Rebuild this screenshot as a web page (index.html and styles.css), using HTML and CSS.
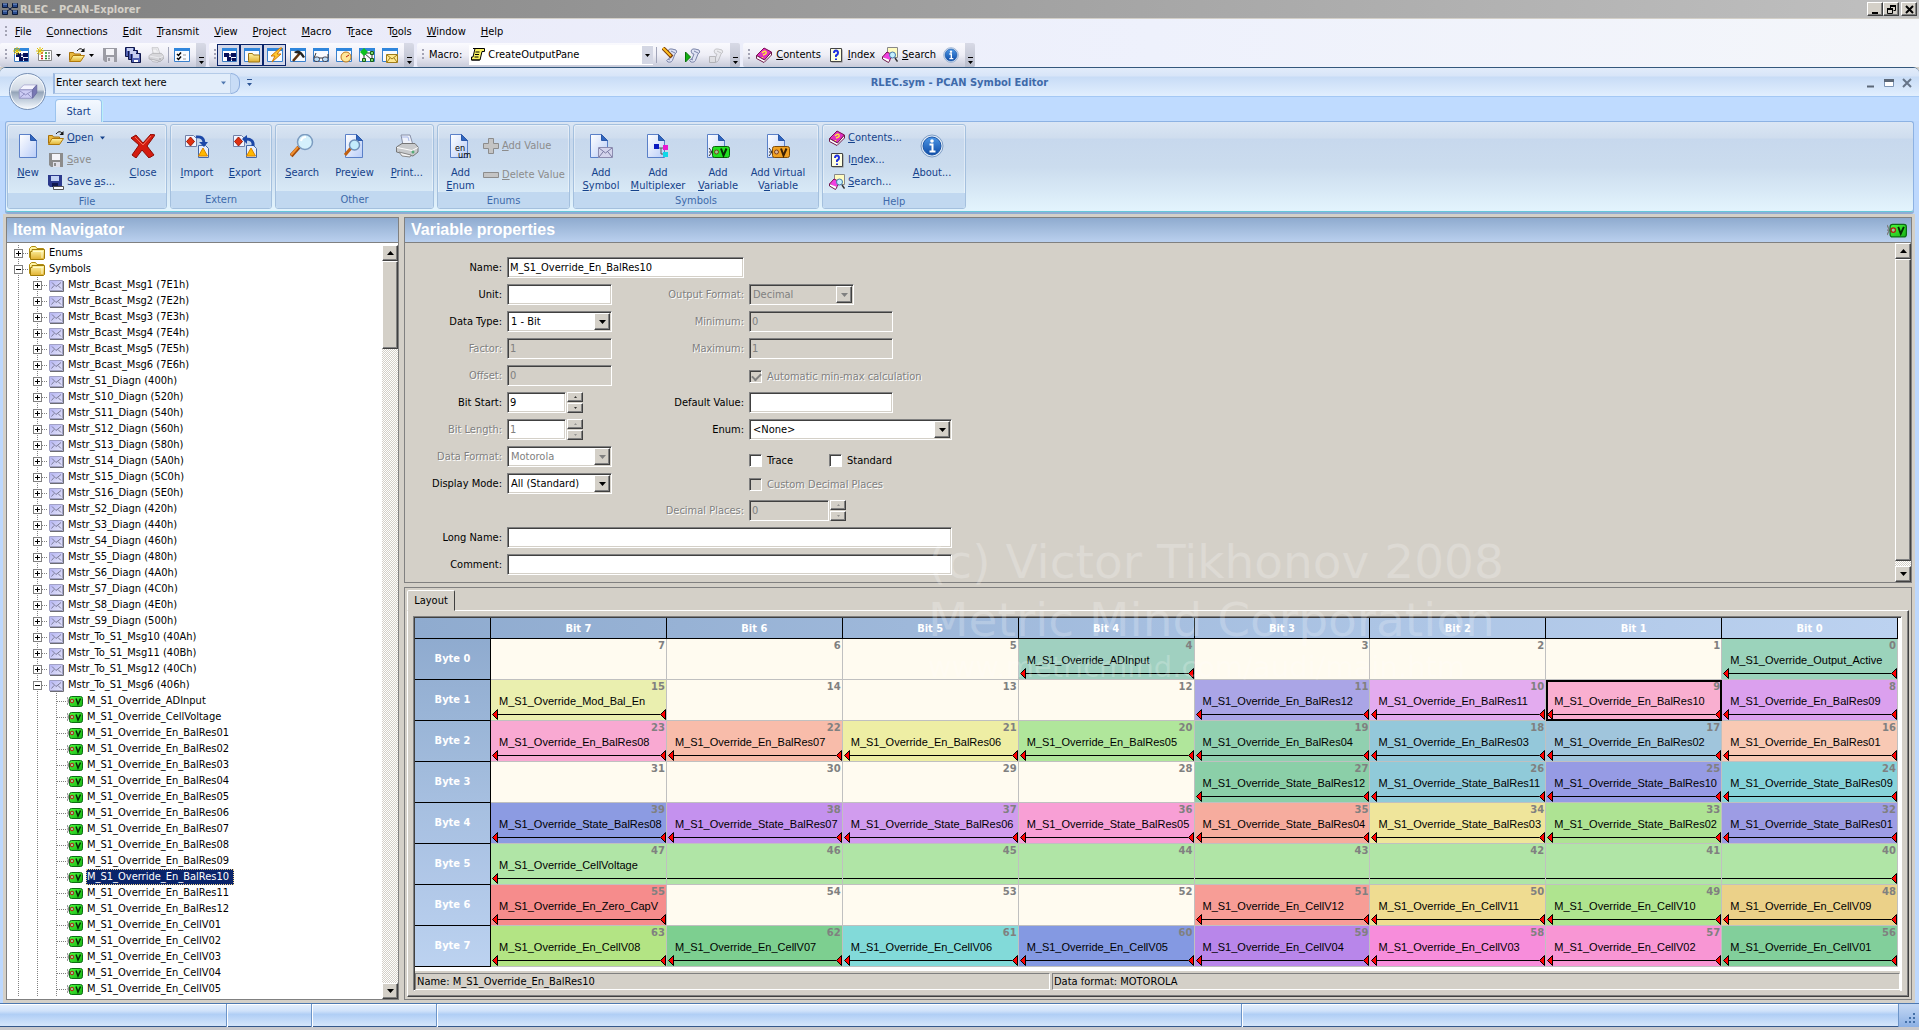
FILE: index.html
```html
<!DOCTYPE html>
<html lang="en">
<head>
<meta charset="utf-8">
<title>RLEC - PCAN-Explorer</title>
<link rel="stylesheet" href="styles.css">
</head>
<body>
<svg class="sprite" width="0" height="0" aria-hidden="true">
  <defs>
    <linearGradient id="g-page" x1="0" y1="0" x2="1" y2="1"><stop offset="0" stop-color="#fff"/><stop offset="1" stop-color="#b9cdf8"/></linearGradient>
    <linearGradient id="g-fold" x1="0" y1="0" x2="0" y2="1"><stop offset="0" stop-color="#fff6a8"/><stop offset="1" stop-color="#e0b030"/></linearGradient>
    <linearGradient id="g-green" x1="0" y1="0" x2="1" y2="1"><stop offset="0" stop-color="#4cff3c"/><stop offset="1" stop-color="#18b014"/></linearGradient>
    <linearGradient id="g-blue" x1="0" y1="0" x2="0" y2="1"><stop offset="0" stop-color="#4d97e6"/><stop offset="1" stop-color="#0d4ba6"/></linearGradient>
    <linearGradient id="g-mail" x1="0" y1="0" x2="1" y2="1"><stop offset="0" stop-color="#b4b4f4"/><stop offset="1" stop-color="#e4e4f8"/></linearGradient>
  </defs>
  <symbol id="app" viewBox="0 0 16 16"><path d="M3 4l10 8M3 12l10-8" stroke="#10204a"/><g fill="#2a4a8a" stroke="#0a1838"><path d="M.5 2.500h5v4h-5zM10.500 2.500h5v4h-5zM.5 9.500h5v4h-5zM10.500 9.500h5v4h-5z"/></g><path d="M1 3h4M11 3h4M1 10h4M11 10h4" stroke="#86a8e0"/></symbol>
  <symbol id="net" viewBox="0 0 16 16"><path d="M1.500 1.500h14v13h-14z" fill="#fff" stroke="#3a7ac0"/><path d="M1 1h15v3H1z" fill="#2f86dc"/><path d="M3 6h5v4H3zM10 6h5v4h-5zM6 10h4v4H6zM11 11h4v3h-4z" fill="#06105a"/><path d="M6 8h6M8 12h5" stroke="#06105a"/></symbol>
  <symbol id="spark" viewBox="0 0 16 16"><path d="M8 0v16M0 8h16M2 2l12 12M14 2L2 14" stroke="#e0c400" stroke-width="2"/></symbol>
  <symbol id="list" viewBox="0 0 16 16"><path d="M2.500 3.500h13v10h-13z" fill="#fff" stroke="#888"/><path d="M5 6h2M5 9h2M5 11.500h2" stroke="#d02020" stroke-width="1.500"/><path d="M9 6h2M9 9h2M9 11.500h2" stroke="#209020" stroke-width="1.500"/><path d="M12 6h2M12 9h2M12 11.500h2" stroke="#888" stroke-width="1.500"/></symbol>
  <symbol id="open" viewBox="0 0 16 16"><path d="M.5 13.500v-8h4l1 1.500h6v2" fill="#e8b840" stroke="#a87008"/><path d="M.5 14.500L4 8.500h11.500l-4 6z" fill="url(#g-fold)" stroke="#b07808"/><path d="M8 4q3-4 6-1" fill="none" stroke="#111"/><path d="M15.500 1v4h-4z" fill="#111"/></symbol>
  <symbol id="save" viewBox="0 0 16 16"><path d="M1 1h14v14H3l-2-2z" fill="currentColor"/><path d="M4 2h8v6H4z" fill="#f4f4f8"/><path d="M5 10h7v5H5z" fill="#e0e0e8"/><path d="M6 11h2v3H6z" fill="currentColor"/></symbol>
  <symbol id="saveas" viewBox="0 0 16 16"><path d="M0 1h14v12H2l-2-2z" fill="#2c3a8c"/><path d="M3 2h8v5H3z" fill="#c4d4f4"/><path d="M4 9h6v4H4z" fill="#10184c"/><path d="M5.500 12.500h10v3h-10z" fill="#fff" stroke="#555"/></symbol>
  <symbol id="saveall" viewBox="0 0 16 16"><g stroke="#10184c" fill="#5060b0"><path d="M.5 .5h9v9h-9z"/><path d="M3.500 3.500h9v9h-9z"/><path d="M6.500 6.500h9v9h-9z"/></g><path d="M2 1h6v3H2zM5 4h6v3H5zM8 7h6v4H8z" fill="#c8d0f0"/><path d="M9 13h4v2H9z" fill="#fff"/></symbol>
  <symbol id="printer" viewBox="0 0 24 24"><path d="M6 1h9l3 10H8z" fill="#eef2fb" stroke="#8890a8"/><path d="M7 3h6l1 4" fill="none" stroke="#a8b8e8"/><path d="M1.500 13L7 9.500h13l3 3.500v5l-5 4-16.500-4z" fill="#c8cacc" stroke="#777"/><path d="M2 13.500l15 3 6-3" fill="none" stroke="#fff"/><path d="M4 18l12 3-1 2-8-1z" fill="#f4f4f4" stroke="#888"/><circle cx="18" cy="18" r="1.500" fill="#5a7"/></symbol>
  <symbol id="win" viewBox="0 0 16 16"><path d="M.5 1.500h15v13H.5z" fill="#f8fbff" stroke="#3a80cc"/><path d="M0 1h16v3H0z" fill="#2f86dc"/></symbol>
  <symbol id="check" viewBox="0 0 16 16"><use href="#win"/><path d="M3 7l1.500 1.500L7 5.500M3 11l1.500 1.500L7 9.500" fill="none" stroke="#000" stroke-width="1.500"/><path d="M9 8h3M9 12h3" stroke="#999"/></symbol>
  <symbol id="folderwin" viewBox="0 0 16 16"><use href="#win"/><path d="M4.500 13.500v-7h4l1 1.500h6v7h-11z" fill="url(#g-fold)" stroke="#9c7410"/></symbol>
  <symbol id="boltwin" viewBox="0 0 16 16"><use href="#win"/><path d="M13 1L4 9h4l-3 6 9-8h-4l5-6z" fill="#ffc830" stroke="#d07808"/></symbol>
  <symbol id="hammer" viewBox="0 0 16 16"><use href="#win"/><path d="M3 14l7-8" stroke="#5c3210" stroke-width="2.500"/><path d="M4 5q5-4 9 2l2 3-2 1-3-4-5-1z" fill="#222"/></symbol>
  <symbol id="glasses" viewBox="0 0 16 16"><use href="#win"/><path d="M1 11l2-5M15 11V7M6 11h4" stroke="#333"/><rect x="1" y="10" width="5.500" height="4.500" rx="2" fill="#b8dcf8" stroke="#445"/><rect x="9.500" y="10" width="5.500" height="4.500" rx="2" fill="#b8dcf8" stroke="#445"/></symbol>
  <symbol id="gauge" viewBox="0 0 16 16"><use href="#win"/><circle cx="10" cy="10" r="5" fill="#ffe89a" stroke="#c07818"/><path d="M10 10l3-2" stroke="#c02010"/></symbol>
  <symbol id="nodes" viewBox="0 0 16 16"><use href="#win"/><path d="M5 6l8 7M5 13V6h8v7" fill="none" stroke="#333"/><path d="M5 1l4 4-4 4-4-4z" fill="#0cc020"/><path d="M11.500 4.500h3v3h-3zM11.500 11.500h3v3h-3zM3.500 11.500h3v3h-3z" fill="#7fdc70" stroke="#185c18"/></symbol>
  <symbol id="mailwin" viewBox="0 0 16 16"><use href="#win"/><path d="M4.500 7.500h11v8h-11z" fill="#ffe890" stroke="#a07c18"/><path d="M5 8l5 4 5-4M5 15l3-4M15 15l-3-4" fill="none" stroke="#a07c18"/></symbol>
  <symbol id="scroll" viewBox="0 0 16 16"><path d="M3 1.500h11.500v3H12l-2 8.500H1.500v-3H3l2-8.500" fill="#f8f060" stroke="#000"/><path d="M5.500 5h4M5 7.500h4M4.500 10h4M1.500 13h8" stroke="#000"/></symbol>
  <symbol id="script" viewBox="0 0 16 16"><path d="M6 4q1-3 4-2l4 1q2 2-1 4l-2 5q-1 4-5 3-3-2 1-3l2-5q-2 1-3-3z" fill="#dfe3f4" stroke="#7a84a8"/><path d="M9 4l4 2M8 13l-2-1" stroke="#7a84a8"/></symbol>
  <symbol id="scriptedit" viewBox="0 0 16 16"><use href="#script"/><path d="M1 1l9 9" stroke="#7c3c08" stroke-width="4"/><path d="M1 1l8 8" stroke="#ffc020" stroke-width="2"/></symbol>
  <symbol id="scriptrun" viewBox="0 0 16 16"><use href="#script"/><path d="M.5 5v10l5-5z" fill="#12b012" stroke="#087008"/></symbol>
  <symbol id="scriptstop" viewBox="0 0 16 16"><g opacity=".7"><use href="#script"/></g><path d="M1.500 9.500h6v6h-6z" fill="#ddd" stroke="#999"/></symbol>
  <symbol id="book" viewBox="0 0 16 16"><path d="M.5 8.500L8 1l7.500 4L8.500 13z" fill="#e030c0" stroke="#7c0c50"/><path d="M.5 8.500v3L8 15.500 15.500 8V5L8.500 13z" fill="#fff" stroke="#6c1848"/><path d="M6 6q3-3 4-1t-3 3M6.500 10v1" fill="none" stroke="#ffe838" stroke-width="1.500"/></symbol>
  <symbol id="index" viewBox="0 0 16 16"><path d="M3.500 2.500h11v13h-11z" fill="#888"/><path d="M2.500 1.500h11v13h-11z" fill="#ffffe0" stroke="#444"/><path d="M6 6q0-2.500 2-2.500T10 6q0 1.500-2 2.500v1.500M8 11.500v1.500" fill="none" stroke="#2030e0" stroke-width="2"/></symbol>
  <symbol id="booksearch" viewBox="0 0 16 16"><path d="M5.500 .5h10v10h-10z" fill="#fffcc0" stroke="#888"/><path d="M.5 10L5 5l6 3-4 6z" fill="#f040e0" stroke="#7c0c50"/><path d="M.5 10v2l6 3.500L8 13" fill="#fff" stroke="#6c1848"/><circle cx="10.500" cy="8" r="3" fill="#c4f0ff" stroke="#4878a8"/><path d="M13 11l2.500 3.500" stroke="#333" stroke-width="1.500"/></symbol>
  <symbol id="info" viewBox="0 0 24 24"><circle cx="12" cy="12" r="11" fill="#e4edf8" stroke="#7c9cc4"/><circle cx="12" cy="12" r="9" fill="url(#g-blue)" stroke="#1a56a8"/><circle cx="12" cy="7" r="1.800" fill="#fff"/><path d="M9.500 10.500H12.500V17M9.500 17.500h6" fill="none" stroke="#fff" stroke-width="2"/></symbol>
  <symbol id="page" viewBox="0 0 24 24"><path d="M3.500 .5h11l6 6v17h-17z" fill="url(#g-page)" stroke="#5a80c8"/><path d="M14.500 .5v6h6z" fill="#2f66c0" stroke="#2c58a8"/></symbol>
  <symbol id="close" viewBox="0 0 24 24"><path d="M0 4l5-3 7 8 8-9 4 1-8 11 7 9-5 3-7-8-6 8-4-3 7-10z" fill="#d41c10" stroke="#8c0c04"/><path d="M4 3l8 8 8-9" stroke="#f47058" fill="none"/></symbol>
  <symbol id="import" viewBox="0 0 24 24"><path d="M.5 1.500h8l3 3v8h-11z" fill="#f0f4ff" stroke="#7080a8"/><path d="M5.500 3l4 4.500-4 4.500-4-4.500z" fill="#e03010" stroke="#9c1c08"/><path d="M13.500 11.500h7l3 3v9h-10z" fill="#e8effc" stroke="#4468a8"/><path d="M18 14l4.500 8h-9z" fill="#ffb800" stroke="#d88400"/><path d="M11 3q8-1 8 6" fill="none" stroke="#1c48a8" stroke-width="3"/><path d="M14 8h9l-4 5z" fill="#1c48a8"/></symbol>
  <symbol id="export" viewBox="0 0 24 24"><path d="M.5 1.500h8l3 3v8h-11z" fill="#f0f4ff" stroke="#7080a8"/><path d="M5.500 3l4 4.500-4 4.500-4-4.500z" fill="#e03010" stroke="#9c1c08"/><path d="M13.500 11.500h7l3 3v9h-10z" fill="#e8effc" stroke="#4468a8"/><path d="M18 14l4.500 8h-9z" fill="#ffb800" stroke="#d88400"/><path d="M20 12q1-7-7-7" fill="none" stroke="#1c48a8" stroke-width="3"/><path d="M14 1v9l-5-5z" fill="#1c48a8"/></symbol>
  <symbol id="magnify" viewBox="0 0 24 24"><path d="M1 22l8-9" stroke="#a04808" stroke-width="4"/><path d="M1 21l7-8" stroke="#f09030" stroke-width="2"/><circle cx="15" cy="8" r="7.500" fill="#d4f0fc" stroke="#7c9cc0" stroke-width="1.500"/><path d="M11 7q1-4 5-4" fill="none" stroke="#fff" stroke-width="2"/></symbol>
  <symbol id="preview" viewBox="0 0 24 24"><use href="#page"/><path d="M3 21l6-7" stroke="#c06010" stroke-width="3"/><circle cx="12.500" cy="11" r="5" fill="#c4ecfc" stroke="#7090b8" stroke-width="1.500"/></symbol>
  <symbol id="addmail" viewBox="0 0 24 24"><use href="#page" x="-2"/><path d="M9.500 13.500h14v10h-14z" fill="#d4d4ec" stroke="#8c8cb0"/><path d="M10 14l6.500 5 6.500-5M10 23l4-5M23 23l-4-5" fill="none" stroke="#7878a0"/></symbol>
  <symbol id="addmux" viewBox="0 0 24 24"><use href="#page" x="-2"/><path d="M13 14h4M15 14v6h3" fill="none" stroke="#555"/><path d="M8 10h5v5H8z" fill="#0818c0"/><path d="M17 11h5v5h-5z" fill="#e818d0"/><path d="M17 18h5v5h-5z" fill="#10d8e8"/></symbol>
  <symbol id="tag" viewBox="0 0 16 16"><path d="M0 4l2 4-2 4M0 8h3" fill="none" stroke="#7c7c7c"/><rect x="2.500" y="3.500" width="13" height="10" rx="2" fill="url(#g-green)" stroke="#0c6c14"/><circle cx="5" cy="8" r="1.800" fill="#9c9" stroke="#b02010"/><path d="M9 5.500l2 5.500 2.500-5.500" fill="none" stroke="#042c04" stroke-width="1.500"/></symbol>
  <symbol id="addvar" viewBox="0 0 24 24"><use href="#page" x="-2"/><path d="M3 14l3 4-3 4M3 18h4" fill="none" stroke="#333"/><rect x="6.500" y="12.500" width="17" height="11" rx="2" fill="#20e020" stroke="#0a600a"/><circle cx="10.500" cy="18" r="2" fill="#9c9" stroke="#804020"/><path d="M15 14.500l2.500 7 3-7" fill="none" stroke="#042c04" stroke-width="2"/></symbol>
  <symbol id="addvirt" viewBox="0 0 24 24"><use href="#page" x="-2"/><path d="M3 14l3 4-3 4M3 18h4" fill="none" stroke="#333"/><rect x="6.500" y="12.500" width="17" height="11" rx="2" fill="#f0a020" stroke="#804c08"/><circle cx="10.500" cy="18" r="2" fill="#db9" stroke="#804020"/><path d="M15 14.500l2.500 7 3-7" fill="none" stroke="#3c2004" stroke-width="2"/></symbol>
  <symbol id="plus" viewBox="0 0 16 16"><path d="M5.500 .5h5v5h5v5h-5v5h-5v-5h-5v-5h5z" fill="#c4c4c4" stroke="#8c8c8c"/></symbol>
  <symbol id="minus" viewBox="0 0 16 16"><path d="M.5 5.500h15v5H.5z" fill="#c4c4c4" stroke="#8c8c8c"/></symbol>
  <symbol id="folder" viewBox="0 0 16 16"><path d="M.5 12.500v-9l2-2h4l1.500 2h6.500v9z" fill="#fff4a0" stroke="#b08c10"/><path d="M1.500 14.500v-8H3V4.500h12.500v9l-1 1z" fill="url(#g-fold)" stroke="#a07c08"/><path d="M4 6.500h10M13 7v6" stroke="#fffac8"/></symbol>
  <symbol id="mail" viewBox="0 0 16 16"><path d="M2 14.500h13.500V4" fill="none" stroke="#6c6c74"/><path d="M1.500 3.500h13v10h-13z" fill="url(#g-mail)" stroke="#a0a0c4"/><path d="M4 5.500l4 4 5-4M3.500 11.500L6 8.500M13 11.500l-3-3" fill="none" stroke="#7c7c98"/></symbol>
  <symbol id="tri" viewBox="0 0 6 11"><path d="M5.500 .5v10L.5 5.500z" fill="#f00" stroke="#000"/></symbol>
  <symbol id="up" viewBox="0 0 7 4"><path d="M0 4L3.500 0 7 4z" fill="currentColor"/></symbol>
  <symbol id="down" viewBox="0 0 7 4"><path d="M0 0h7L3.500 4z" fill="currentColor"/></symbol>
  <symbol id="more" viewBox="0 0 7 8"><path d="M1 0h5v1H1zM1 4h5L3.500 7z" fill="currentColor"/></symbol>
</svg>

<header class="titlebar">
  <svg class="i16"><use href="#app"/></svg>
  <h1>RLEC - PCAN-Explorer</h1>
  <div class="winbtns">
    <button aria-label="Minimize"><svg viewBox="0 0 9 9"><path d="M1 8h6" stroke="#000" stroke-width="2"/></svg></button>
    <button aria-label="Restore"><svg viewBox="0 0 9 9"><path d="M3 1h6M0 4h6" stroke="#000" stroke-width="2"/><path d="M3.500 1v2M8.500 1v4.500H6.500M.5 4v4.500h5V4" fill="none" stroke="#000"/></svg></button>
    <button class="x" aria-label="Close"><svg viewBox="0 0 9 9"><path d="M1 1l7 7M8 1L1 8" stroke="#000" stroke-width="2"/></svg></button>
  </div>
</header>

<nav class="menubar">
  <span class="grip"></span>
  <a href="#"><u>F</u>ile</a><a href="#"><u>C</u>onnections</a><a href="#"><u>E</u>dit</a><a href="#"><u>T</u>ransmit</a><a href="#"><u>V</u>iew</a><a href="#"><u>P</u>roject</a><a href="#"><u>M</u>acro</a><a href="#">T<u>r</u>ace</a><a href="#">T<u>o</u>ols</a><a href="#"><u>W</u>indow</a><a href="#"><u>H</u>elp</a>
</nav>

<div class="toolbars">
  <div class="bar bar-file">
    <span class="grip"></span>
    <button aria-label="New connection"><svg class="i16"><use href="#net"/><use href="#spark" width="8" height="8"/></svg></button>
    <button class="drop" aria-label="New"><svg class="i16"><use href="#list"/><use href="#spark" width="8" height="8"/></svg><svg class="dn"><use href="#down"/></svg></button>
    <button class="drop" aria-label="Open"><svg class="i16"><use href="#open"/></svg><svg class="dn"><use href="#down"/></svg></button>
    <button class="dim" aria-label="Save"><svg class="i16"><use href="#save"/></svg></button>
    <button aria-label="Save all"><svg class="i16"><use href="#saveall"/></svg></button>
    <button class="dim" aria-label="Print"><svg class="i16 faded"><use href="#printer"/></svg></button>
    <span class="sep"></span>
    <button aria-label="Options"><svg class="i16"><use href="#check"/></svg></button>
    <button class="more" aria-label="More buttons"><svg><use href="#more"/></svg></button>
  </div>
  <div class="bar bar-view">
    <span class="grip"></span>
    <button class="on" aria-label="Connections"><svg class="i16"><use href="#net"/></svg></button>
    <button class="on" aria-label="Project"><svg class="i16"><use href="#folderwin"/></svg></button>
    <button class="on" aria-label="Transmit"><svg class="i16"><use href="#boltwin"/></svg></button>
    <button aria-label="Tools"><svg class="i16"><use href="#hammer"/></svg></button>
    <button aria-label="Watch"><svg class="i16"><use href="#glasses"/></svg></button>
    <button aria-label="Instruments"><svg class="i16"><use href="#gauge"/></svg></button>
    <button aria-label="Nodes"><svg class="i16"><use href="#nodes"/></svg></button>
    <button aria-label="Messages"><svg class="i16"><use href="#mailwin"/></svg></button>
    <button class="more" aria-label="More buttons"><svg><use href="#more"/></svg></button>
  </div>
  <div class="bar bar-macro">
    <span class="grip"></span>
    <label for="macro">Macro:</label>
    <span class="macro"><svg class="i16"><use href="#scroll"/></svg><select id="macro"><option>CreateOutputPane</option></select><span class="dnbox"><svg class="dn"><use href="#down"/></svg></span></span>
    <span class="sep"></span>
    <button aria-label="Edit macro"><svg class="i16"><use href="#scriptedit"/></svg></button>
    <button aria-label="Run macro"><svg class="i16"><use href="#scriptrun"/></svg></button>
    <button aria-label="Stop macro"><svg class="i16 faded"><use href="#scriptstop"/></svg></button>
    <button class="more" aria-label="More buttons"><svg><use href="#more"/></svg></button>
  </div>
  <div class="bar bar-help">
    <span class="grip"></span>
    <button class="txt"><svg class="i16"><use href="#book"/></svg><span><u>C</u>ontents</span></button>
    <button class="txt"><svg class="i16"><use href="#index"/></svg><span><u>I</u>ndex</span></button>
    <button class="txt"><svg class="i16"><use href="#booksearch"/></svg><span><u>S</u>earch</span></button>
    <button aria-label="About"><svg class="i16"><use href="#info"/></svg></button>
    <button class="more" aria-label="More buttons"><svg><use href="#more"/></svg></button>
  </div>
</div>

<section class="child">
  <header class="child-title">
    <div class="orb"><svg viewBox="0 0 24 24"><path d="M7 3.500L22.500 3.500 17.500 9H1.500z" fill="#f4f4fe" stroke="#a8a8d0"/><path d="M1.500 9.500h15.500v10H1.500z" fill="#ccccf4" stroke="#9090c0"/><path d="M2 19l6-5M16.500 19l-5-5M2 10.500l7 5 8-5" stroke="#8888bc" fill="none"/><path d="M17.500 9v10.500l5-6.500V3.500z" fill="#7878b4" stroke="#6868a0"/></svg></div>
    <div class="qsearch"><input type="text" aria-label="Search" value="Enter search text here"><svg class="dn"><use href="#down"/></svg></div>
    <span class="qcap"></span>
    <svg class="qmore"><use href="#more"/></svg>
    <h2>RLEC.sym - PCAN Symbol Editor</h2>
    <div class="child-btns">
      <button aria-label="Minimize"><svg viewBox="0 0 10 10"><path d="M1 8.500h7" stroke="#5c6878" stroke-width="2"/></svg></button>
      <button aria-label="Maximize"><svg viewBox="0 0 10 10"><path d="M.5 2.500h9v6h-9z" fill="#fff" stroke="#7c94b4"/><path d="M0 2.500h10" stroke="#5c6878" stroke-width="3"/></svg></button>
      <button aria-label="Close"><svg viewBox="0 0 10 10"><path d="M1 1l8 8M9 1L1 9" stroke="#667488" stroke-width="2"/></svg></button>
    </div>
  </header>
  <div class="tabs"><button>Start</button></div>

  <div class="ribbon">
    <div class="group g-file">
      <div class="items">
        <button class="big"><svg><use href="#page"/></svg><span><u>N</u>ew</span></button>
        <div class="stack">
          <button><svg class="i16"><use href="#open"/></svg><span><u>O</u>pen</span><svg class="dn"><use href="#down"/></svg></button>
          <button class="off" disabled><svg class="i16"><use href="#save"/></svg><span><u>S</u>ave</span></button>
          <button><svg class="i16"><use href="#saveas"/></svg><span>Save <u>a</u>s...</span></button>
        </div>
        <button class="big"><svg><use href="#close"/></svg><span><u>C</u>lose</span></button>
      </div>
      <h3>File</h3>
    </div>
    <div class="group g-extern">
      <div class="items">
        <button class="big"><svg><use href="#import"/></svg><span><u>I</u>mport</span></button>
        <button class="big"><svg><use href="#export"/></svg><span><u>E</u>xport</span></button>
      </div>
      <h3>Extern</h3>
    </div>
    <div class="group g-other">
      <div class="items">
        <button class="big"><svg><use href="#magnify"/></svg><span><u>S</u>earch</span></button>
        <button class="big"><svg><use href="#preview"/></svg><span>Pre<u>v</u>iew</span></button>
        <button class="big"><svg><use href="#printer"/></svg><span><u>P</u>rint...</span></button>
      </div>
      <h3>Other</h3>
    </div>
    <div class="group g-enums">
      <div class="items">
        <button class="big"><svg viewBox="0 0 24 24"><use href="#page" x="-2" width="24" height="24"/><text class="enumtxt" x="6" y="17">en</text><text class="enumtxt" x="9" y="24">um</text></svg><span>Add<br><u>E</u>num</span></button>
        <div class="stack two">
          <button class="off" disabled><svg class="i16"><use href="#plus"/></svg><span><u>A</u>dd Value</span></button>
          <button class="off" disabled><svg class="i16"><use href="#minus"/></svg><span><u>D</u>elete Value</span></button>
        </div>
      </div>
      <h3>Enums</h3>
    </div>
    <div class="group g-symbols">
      <div class="items">
        <button class="big"><svg><use href="#addmail"/></svg><span>Add<br><u>S</u>ymbol</span></button>
        <button class="big"><svg><use href="#addmux"/></svg><span>Add<br><u>M</u>ultiplexer</span></button>
        <button class="big"><svg><use href="#addvar"/></svg><span>Add<br><u>V</u>ariable</span></button>
        <button class="big"><svg><use href="#addvirt"/></svg><span>Add Virtual<br>V<u>a</u>riable</span></button>
      </div>
      <h3>Symbols</h3>
    </div>
    <div class="group g-help">
      <div class="items">
        <div class="stack">
          <button><svg class="i16"><use href="#book"/></svg><span><u>C</u>ontents...</span></button>
          <button><svg class="i16"><use href="#index"/></svg><span>I<u>n</u>dex...</span></button>
          <button><svg class="i16"><use href="#booksearch"/></svg><span><u>S</u>earch...</span></button>
        </div>
        <button class="big"><svg><use href="#info"/></svg><span><u>A</u>bout...</span></button>
      </div>
      <h3>Help</h3>
    </div>
  </div>

  <div class="workspace">
    <aside class="panel navigator">
      <h2 class="panel-head">Item Navigator</h2>
      <div class="tree-wrap">
        <div class="tree" id="tree"></div>
        <div class="scroll">
          <button aria-label="Scroll up"><svg class="dn"><use href="#up"/></svg></button>
          <span class="thumb thumb-tree"></span><span class="track"></span>
          <button aria-label="Scroll down"><svg class="dn"><use href="#down"/></svg></button>
        </div>
      </div>
    </aside>

    <main class="right">
      <section class="panel props">
        <h2 class="panel-head">Variable properties<svg class="headtag"><use href="#tag"/></svg></h2>
        <div class="props-body">
          <form class="form">
            <label class="c1 r1" for="name">Name:</label><input class="c2 r1 w23" id="name" type="text" value="M_S1_Override_En_BalRes10">
            <label class="c1 r2" for="unit">Unit:</label><input class="c2 r2" id="unit" type="text">
            <label class="c1 r3" for="dtype">Data Type:</label><span class="combo c2 r3"><select id="dtype"><option>1 - Bit</option></select><i><svg class="dn"><use href="#down"/></svg></i></span>
            <label class="c1 r4 off" for="factor">Factor:</label><input class="c2 r4" id="factor" type="text" value="1" disabled>
            <label class="c1 r5 off" for="offset">Offset:</label><input class="c2 r5" id="offset" type="text" value="0" disabled>
            <label class="c1 r6" for="bstart">Bit Start:</label><span class="spin c2 r6"><input id="bstart" type="text" value="9"><span><button type="button" aria-label="Up"><svg><use href="#up"/></svg></button><button type="button" aria-label="Down"><svg><use href="#down"/></svg></button></span></span>
            <label class="c1 r7 off" for="blen">Bit Length:</label><span class="spin c2 r7 off"><input class="white" id="blen" type="text" value="1" disabled><span><button type="button" disabled aria-label="Up"><svg><use href="#up"/></svg></button><button type="button" disabled aria-label="Down"><svg><use href="#down"/></svg></button></span></span>
            <label class="c1 r8 off" for="dfmt">Data Format:</label><span class="combo off c2 r8"><select id="dfmt" disabled><option>Motorola</option></select><i><svg class="dn"><use href="#down"/></svg></i></span>
            <label class="c1 r9" for="mode">Display Mode:</label><span class="combo c2 r9"><select id="mode"><option>All (Standard)</option></select><i><svg class="dn"><use href="#down"/></svg></i></span>
            <label class="c1 r11" for="lname">Long Name:</label><input class="c2 r11 w24" id="lname" type="text">
            <label class="c1 r12" for="comment">Comment:</label><input class="c2 r12 w24" id="comment" type="text">

            <label class="c3 r2 off" for="ofmt">Output Format:</label><span class="combo off gray c4 r2 short"><select id="ofmt" disabled><option>Decimal</option></select><i><svg class="dn"><use href="#down"/></svg></i></span>
            <label class="c3 r3 off" for="min">Minimum:</label><input class="c4 r3 mid" id="min" type="text" value="0" disabled>
            <label class="c3 r4 off" for="max">Maximum:</label><input class="c4 r4 mid" id="max" type="text" value="1" disabled>
            <div class="c4 r5 checks"><label class="off"><input type="checkbox" checked disabled>Automatic min-max calculation</label></div>
            <label class="c3 r6" for="defv">Default Value:</label><input class="c4 r6 mid" id="defv" type="text">
            <label class="c3 r7" for="enum">Enum:</label><span class="combo c4 r7"><select id="enum"><option>&lt;None&gt;</option></select><i><svg class="dn"><use href="#down"/></svg></i></span>
            <div class="c4 r8 checks low"><label><input type="checkbox">Trace</label><label><input type="checkbox">Standard</label></div>
            <div class="c4 r9 checks"><label class="off"><input type="checkbox" disabled>Custom Decimal Places</label></div>
            <label class="c3 r10 off" for="dplaces">Decimal Places:</label><span class="spin wide c4 r10 off"><input id="dplaces" type="text" value="0" disabled><span><button type="button" disabled aria-label="Up"><svg><use href="#up"/></svg></button><button type="button" disabled aria-label="Down"><svg><use href="#down"/></svg></button></span></span>
          </form>
          <div class="scroll">
            <button aria-label="Scroll up"><svg class="dn"><use href="#up"/></svg></button>
            <span class="thumb thumb-full"></span><span class="track"></span>
            <button aria-label="Scroll down"><svg class="dn"><use href="#down"/></svg></button>
          </div>
        </div>
      </section>

      <section class="panel layout">
        <div class="ltabs"><button>Layout</button></div>
        <div class="page">
          <div class="well">
            <table class="bits">
              <thead><tr id="bit-heads"><th class="corner"></th></tr></thead>
              <tbody id="bit-rows"></tbody>
            </table>
            <div class="gridstatus"><span>Name: M_S1_Override_En_BalRes10</span><span>Data format: MOTOROLA</span></div>
          </div>
        </div>
      </section>
      <div class="watermark"><p>(c) Victor Tikhonov 2008</p><p>Metric Mind Corporation</p><p class="small">www.metricmind.com/audi/main.htm</p></div>
    </main>
  </div>
</section>

<footer class="status">
  <span class="s1"></span><span class="s2"></span><span class="s3"></span><span class="s4"></span><span class="s5"></span>
  <span class="sgrip"><svg viewBox="0 0 12 12"><path d="M9 1h2v2H9zM9 5h2v2H9zM9 9h2v2H9zM5 5h2v2H5zM5 9h2v2H5zM1 9h2v2H1z" fill="#4470a8"/></svg></span>
</footer>
<script src="app.js"></script>
</body>
</html>
```
FILE: styles.css
```css
* { box-sizing: border-box; }
html, body { height: 100%; }
body {
  margin: 0; display: flex; flex-direction: column; overflow: hidden;
  font: 11px/14px "DejaVu Sans Condensed", "DejaVu Sans", sans-serif;
  color: #000; background: #d4d0c8;
}
button, input, select { font: inherit; color: inherit; margin: 0; padding: 0; border: 0; border-radius: 0; background: none; }
button { display: flex; align-items: center; justify-content: center; white-space: nowrap; }
h1, h2, h3, p { margin: 0; font: inherit; }
a { color: inherit; text-decoration: none; }
svg { display: block; flex: none; overflow: visible; }
.sprite { position: absolute; }
.i16 { width: 16px; height: 16px; }
.dn { width: 7px; height: 4px; }
.faded { opacity: .6; filter: grayscale(1); }

.titlebar { display: flex; align-items: center; gap: 2px; height: 19px; flex: none; padding: 0 2px; background: linear-gradient(90deg, #808080, #c0c0c0); border-bottom: 1px solid #d4d0c8; }
.titlebar h1 { flex: 1; padding-top: 1px; font-weight: bold; color: #d4d0c8; }
.winbtns { display: flex; }
.winbtns button { width: 16px; height: 14px; background: #d4d0c8; border: 1px solid; border-color: #fff #404040 #404040 #fff; box-shadow: inset -1px -1px #808080; }
.winbtns .x { margin-left: 2px; }
.winbtns svg { width: 9px; height: 9px; }

.menubar { display: flex; align-items: center; gap: 15px; height: 24px; flex: none; padding: 2px 0 0 5px; background: linear-gradient(90deg, #e9e9f8, #eef1fc 60%, #f4f6fa); }
.grip { width: 2px; height: 12px; margin-left: 1px; background: repeating-linear-gradient(#a4a4b4 0 2px, transparent 2px 4px); flex: none; }
.menubar .grip { margin-right: -7px; margin-left: 0; }

.toolbars { display: flex; gap: 3px; height: 24px; flex: none; background: linear-gradient(90deg, #e9e9f8, #eef1fc 60%, #f4f6fa); }
.bar { display: flex; align-items: center; height: 24px; padding-left: 5px; background: linear-gradient(#fafafe, #eeeef6 50%, #c8cbda); border-radius: 2px; }
.bar .grip { margin: 0 2px 0 0; }
.bar-view .grip { margin-right: 1px; }
.bar button { width: 23px; height: 22px; }
.bar button.drop { width: 33px; gap: 4px; }
.bar .dn { width: 5px; height: 3px; }
.bar .dim { color: #9c9ca4; }
.bar .on { background: #d4d8e8; border: 1px solid #0a246a; }
.bar .more { width: 10px; height: 24px; margin-left: 3px; align-items: flex-end; padding-bottom: 2px; background: linear-gradient(#d8dae6, #b8bccb); border-radius: 0 2px 2px 0; }
.more svg, .qmore { width: 7px; height: 8px; }
.sep { width: 1px; height: 16px; margin: 0 1px; background: #a0a4b8; }
.bar label { margin: 0 7px 0 3px; }
.macro { display: flex; align-items: center; gap: 2px; width: 184px; height: 20px; margin-right: 2px; padding-left: 1px; background: #fff; }
.macro select { flex: 1; min-width: 0; appearance: none; }
.dnbox { width: 11px; height: 18px; display: flex; align-items: center; justify-content: center; background: #d4d7e4; }
.bar button.txt { width: auto; gap: 4px; padding: 0 3px 0 4px; }

.child { flex: 1; min-height: 0; display: flex; flex-direction: column; border-top: 1px solid #34587c; border-radius: 6px 6px 0 0; background: #bdd8fd; }
.child-title { position: relative; flex: none; display: flex; align-items: center; height: 29px; padding: 2px 7px 0 53px; border-radius: 5px 5px 0 0; background: linear-gradient(#e2ecfa, #d8e5f8 8px, #c8dcf6 9px, #e2effe); border-bottom: 1px solid #a4c8f4; }
.orb { position: absolute; left: 9px; top: 5px; width: 37px; height: 37px; border-radius: 50%; display: flex; align-items: center; justify-content: center; border: 1px solid #7890b4; background: linear-gradient(#f0f4f9, #d0d9e4 45%, #94a4b8 52%, #c4d0de 75%, #f8fbff); box-shadow: inset 0 0 0 1px #f4f8fc; }
.orb svg { width: 22px; height: 20px; }
.qsearch { display: flex; align-items: center; width: 178px; height: 21px; padding: 0 4px 0 1px; border: 1px solid #b4cbe8; border-left: 2px solid #9cb8e0; background: #e2edfa; color: #000; }
.qsearch input { flex: 1; min-width: 0; }
.qsearch svg { color: #5078b0; width: 5px; }
.qcap { width: 9px; height: 21px; border: 1px solid #8cacdc; border-left: 0; border-radius: 0 10px 10px 0; background: #c8dcf6; }
.qmore { margin-left: 6px; color: #2c5494; }
.child-title h2 { flex: 1; padding-right: 200px; text-align: center; font-weight: bold; color: #3e6aaa; }
.child-btns { display: flex; gap: 8px; }
.child-btns svg { width: 10px; height: 10px; }
.tabs { flex: none; display: flex; height: 24px; padding: 2px 0 0 55px; background: #bfdbff; }
.tabs button { width: 47px; height: 23px; padding-top: 1px; color: #15428b; background: linear-gradient(#f4f9ff, #dfeaf8); border: 1px solid #9cc4ee; border-bottom: 0; border-radius: 4px 4px 0 0; box-shadow: 1px 0 #b8f0f8; z-index: 1; }

.ribbon { flex: none; display: flex; gap: 3px; height: 91px; margin: 0 5px; padding: 2px 1px; border: 1px solid #8db2e3; border-bottom-color: #68c8d8; border-radius: 3px; background: linear-gradient(#dbe6f4, #cfddee 16px, #c7d8ed 17px, #cbdcee 45px, #e3f4fd); box-shadow: 0 2px #90acd4; }
.group { display: flex; flex-direction: column; border: 1px solid #a4c0de; border-radius: 3px; box-shadow: inset 0 0 0 1px rgba(255,255,255,.4); color: #15428b; overflow: hidden; }
.items { flex: 1; display: flex; }
.group h3 { height: 17px; line-height: 17px; text-align: center; color: #3e6aaa; background: #c1d8f0; }
.big { flex-direction: column; justify-content: flex-start; padding-top: 9px; gap: 8px; line-height: 13px; text-align: center; }
.big svg { width: 24px; height: 24px; }
.enumtxt { font: 9px "DejaVu Sans Condensed", sans-serif; }
.stack { display: flex; flex-direction: column; padding-top: 2px; }
.stack button { height: 22px; justify-content: flex-start; gap: 3px; }
.stack.two { padding-top: 6px; }
.stack.two button { height: 29px; }
.stack .dn { margin-left: 4px; width: 5px; }
.stack .off { color: #8c8c8c; }
.group .big { flex: 1; }
.g-file { width: 160px; } .g-file .stack { width: 72px; } .g-file .big:first-child { flex: 0 0 40px; }
.g-extern { width: 102px; padding: 0 2px; } .g-extern h3 { margin: 0 -2px; }
.g-other { width: 159px; }
.g-enums { width: 133px; } .g-enums .stack { width: 86px; }
.g-symbols { width: 246px; } .g-symbols .big { flex: 0 0 60px; } .g-symbols .big:first-child { flex-basis: 54px; }
.g-help { width: 144px; } .g-help .stack { width: 76px; padding-left: 6px; }

.workspace { flex: 1; min-height: 0; display: flex; gap: 5px; margin: 2px 4px 0 3px; padding: 3px 3px 3px 3px; background: #d4d0c8; }
.panel { border: 1px solid #808080; display: flex; flex-direction: column; min-height: 0; }
.navigator { width: 393px; flex: none; }
.panel-head { flex: none; display: flex; align-items: center; justify-content: space-between; height: 25px; padding: 0 4px 0 6px; font: bold 16px/24px "Liberation Sans", sans-serif; color: #fff; background: linear-gradient(#8fabcf, #bad0ee); border-bottom: 1px solid #808080; }
.headtag { width: 20px; height: 20px; }
.tree-wrap { flex: 1; min-height: 0; display: flex; background: #fff; padding-top: 2px; }
.tree { flex: 1; overflow: hidden; padding-left: 2px; }
.node { display: flex; align-items: center; height: 16px; white-space: nowrap; }
.node .i16 { margin: 0 4px 0 1px; }
.guide, .branch { width: 19px; height: 16px; flex: none; background: repeating-linear-gradient(#808080 0 1px, transparent 1px 2px) 9px 0 / 1px 100% no-repeat; }
.branch { display: flex; align-items: center; padding-left: 5px; background: repeating-linear-gradient(#808080 0 1px, transparent 1px 2px) 9px 0 / 1px 100% no-repeat, repeating-linear-gradient(90deg, #808080 0 1px, transparent 1px 2px) 10px 8px / 9px 1px no-repeat; }
.branch button { width: 9px; height: 9px; border: 1px solid #808080; background: linear-gradient(#000, #000) center / 5px 1px no-repeat, #fff; }
.branch button[aria-expanded="false"] { background: linear-gradient(#000, #000) center / 5px 1px no-repeat, linear-gradient(#000, #000) center / 1px 5px no-repeat, #fff; }
.sel span:last-child { height: 16px; line-height: 14px; color: #fff; background: #0a246a; border: 1px dotted #f4d890; padding-right: 4px; margin-left: -1px; }

.scroll { width: 16px; flex: none; display: flex; flex-direction: column; background: repeating-conic-gradient(#fff 0 25%, #d4d0c8 0 50%) 0 0 / 2px 2px; }
.scroll button, .thumb, .combo i, .spin button { background: #d4d0c8; border: 1px solid; border-color: #fff #404040 #404040 #fff; box-shadow: inset -1px -1px #808080; }
.scroll button { width: 16px; height: 16px; flex: none; }
.track { flex: 1; }
.thumb-tree { height: 88px; }
.thumb-full { flex: 1; }
.thumb-full + .track { flex: none; height: 5px; }

.right { position: relative; flex: 1; min-width: 0; display: flex; flex-direction: column; gap: 4px; }
.props { flex: none; }
.props-body { display: flex; justify-content: space-between; }
.form { display: grid; grid-template-columns: 97px 105px 127px 203px; grid-auto-rows: 21px; gap: 6px 5px; padding: 14px 0 7px; align-items: center; }
.form > label { text-align: right; }
.c1 { grid-column: 1; } .c2 { grid-column: 2; } .c3 { grid-column: 3; } .c4 { grid-column: 4; }
.w23 { grid-column: 2 / 4; } .w24 { grid-column: 2 / 5; }
.r1 { grid-row: 1; } .r2 { grid-row: 2; } .r3 { grid-row: 3; } .r4 { grid-row: 4; } .r5 { grid-row: 5; } .r6 { grid-row: 6; }
.r7 { grid-row: 7; } .r8 { grid-row: 8; } .r9 { grid-row: 9; } .r10 { grid-row: 10; } .r11 { grid-row: 11; } .r12 { grid-row: 12; }
.form input[type="text"], .combo { width: 100%; height: 21px; background: #fff; border: 1px solid; border-color: #808080 #fff #fff #808080; box-shadow: inset 1px 1px #404040, inset -1px -1px #d4d0c8; }
.form input[type="text"] { padding: 0 2px; }
.form input[type="text"]:disabled { background: #d4d0c8; color: #808080; }
.form input[type="text"].white { background: #fff; }
.form input[type="text"].mid { width: 144px; }
.form label.off { color: #808080; text-shadow: 1px 1px #fff; }
.combo { display: flex; padding: 1px; }
.combo select { flex: 1; min-width: 0; appearance: none; padding: 1px 2px 0; opacity: 1; }
.combo i { width: 16px; display: flex; align-items: center; justify-content: center; }
.combo.off, .spin.off { color: #808080; }
.combo.gray { background: #d4d0c8; }
.combo.short { width: 105px; }
.spin { display: flex; gap: 1px; }
.form .spin input[type="text"] { width: 59px; }
.form .spin.wide input[type="text"] { width: 80px; }
.spin button { width: 16px; height: 10px; margin-bottom: 1px; }
.spin svg { width: 3px; height: 2px; }
.checks { display: flex; padding-top: 2px; }
.checks.low { padding-top: 8px; }
.checks label { display: flex; align-items: center; gap: 5px; width: 80px; white-space: nowrap; }
.checks input { appearance: none; width: 13px; height: 13px; flex: none; background: #fff; border: 1px solid; border-color: #808080 #fff #fff #808080; box-shadow: inset 1px 1px #404040; }
.checks input:disabled { background: #d4d0c8; }
.checks input:checked::before { content: ""; display: block; width: 7px; height: 4px; margin: 2px 0 0 2px; border: 2px solid #808080; border-width: 0 0 2px 2px; transform: rotate(-45deg); }

.layout { flex: 1; padding: 2px; }
.ltabs { display: flex; height: 20px; }
.ltabs button { width: 48px; height: 21px; border: 1px solid; border-color: #fff #404040 transparent #fff; border-radius: 2px 2px 0 0; background: #d4d0c8; z-index: 1; }
.page { flex: 1; min-height: 0; display: flex; padding: 5px 6px 5px 5px; border: 1px solid; border-color: #fff #404040 #404040 #fff; box-shadow: inset -1px -1px #808080; }
.well { flex: 1; min-width: 0; display: flex; flex-direction: column; background: #fff; border: 1px solid; border-color: #808080 #fff #fff #808080; box-shadow: inset 1px 1px #404040; padding: 1px; }
.bits { width: calc(100% - 2px); table-layout: fixed; border-spacing: 0; margin-bottom: 4px; background: #fffbf0; }
.bits th { padding: 0; font-weight: bold; color: #fff; border: 0 solid #000; border-width: 0 1px 1px 0; }
.bits thead tr { background: linear-gradient(90deg, #8fabcf, #bcd2f0); }
.bits thead th { height: 21px; padding-top: 2px; }
.bits .corner { width: 76px; }
.bits td { padding: 0; height: 41px; border: 0 solid #c0c0c0; border-width: 0 1px 1px 0; }
.cell { display: flex; flex-direction: column; height: 40px; }
.num { height: 14px; padding-right: 1px; text-align: right; font: bold 10px/14px "DejaVu Sans", sans-serif; color: #808080; }
.sig { height: 15px; padding-left: 8px; font: 11px/15px "Liberation Sans", sans-serif; white-space: nowrap; }
.arrow { display: flex; align-items: center; height: 11px; }
.arrow.start { padding-left: 1px; }
.arrow::after { content: ""; flex: 1; height: 1px; background: #000; order: 1; }
.arrow svg { width: 6px; height: 11px; }
.arrow svg.end { order: 2; }
.bits td.picked { outline: 2px solid #000; outline-offset: -2px; }
.gridstatus { display: flex; gap: 2px; background: #d4d0c8; margin-top: auto; padding: 2px 0 1px; line-height: 15px; }
.gridstatus span { flex: 0 0 635px; padding-left: 1px; border: 1px solid; border-color: #808080 #fff #fff #808080; }
.gridstatus span:last-child { flex: 1; }
.watermark { position: absolute; left: 524px; top: 316px; font: 47px/58px "DejaVu Sans", sans-serif; color: rgba(255,255,255,.22); white-space: nowrap; pointer-events: none; }
.watermark .small { font-size: 29px; line-height: 36px; }

.status { flex: none; display: flex; height: 27px; border-top: 1px solid #4c78b0; border-bottom: 3px solid #c8c8cc; background: linear-gradient(#e4effd, #d0e2fa 30%, #b0cef5 45%, #d8e8fc); box-shadow: inset 0 1px #fff, inset 0 -1px #34588c; }
.status span { border-right: 1px solid #6c94c8; box-shadow: 1px 0 #fff; }
.s1 { width: 227px; } .s2 { width: 85px; } .s3 { width: 125px; } .s4 { width: 805px; } .s5 { flex: 1; }
.status .sgrip { display: flex; align-items: flex-end; justify-content: flex-end; width: 20px; padding: 3px; border: 0; background: linear-gradient(#c4d8f4, #8cb0e4); }
.sgrip svg { width: 12px; height: 12px; }
```
FILE: app.js
```js
const use = (id, cls) => `<svg class="${cls}"><use href="#${id}"/></svg>`;

/* Item navigator: depth, toggle state, icon, caption */
const nodes = [[0, "+", "folder", "Enums"], [0, "-", "folder", "Symbols"]];
for (let i = 1; i <= 6; i++) nodes.push([1, "+", "mail", `Mstr_Bcast_Msg${i} (7E${i}h)`]);
[["S1", "400"], ["S10", "520"], ["S11", "540"], ["S12", "560"], ["S13", "580"], ["S14", "5A0"],
 ["S15", "5C0"], ["S16", "5E0"], ["S2", "420"], ["S3", "440"], ["S4", "460"], ["S5", "480"],
 ["S6", "4A0"], ["S7", "4C0"], ["S8", "4E0"], ["S9", "500"]]
  .forEach(([n, id]) => nodes.push([1, "+", "mail", `Mstr_${n}_Diagn (${id}h)`]));
[["10", "40A"], ["11", "40B"], ["12", "40C"]]
  .forEach(([n, id]) => nodes.push([1, "+", "mail", `Mstr_To_S1_Msg${n} (${id}h)`]));
nodes.push([1, "-", "mail", "Mstr_To_S1_Msg6 (406h)"]);
const pad = n => String(n).padStart(2, "0");
const kids = ["ADInput", "CellVoltage"];
for (let i = 1; i <= 12; i++) kids.push("En_BalRes" + pad(i));
for (let i = 1; i <= 5; i++) kids.push("En_CellV" + pad(i));
kids.forEach(k => nodes.push([2, "", "tag", "M_S1_Override_" + k]));

document.getElementById("tree").innerHTML = nodes.map(([depth, state, icon, text]) => {
  const toggle = state ? `<button aria-label="Toggle" aria-expanded="${state === "-"}"></button>` : "";
  const sel = text.endsWith("En_BalRes10") ? " sel" : "";
  return `<div class="node${sel}">${'<span class="guide"></span>'.repeat(depth)}<span class="branch">${toggle}</span>${use(icon, "i16")}<span>${text}</span></div>`;
}).join("");

/* Bit layout: one list per byte, bit 7 first; null is an unused bit */
const rows = [
  [null, null, null, ["ADInput", "#a0d0c0"], null, null, null, ["Output_Active", "#9bd3bb"]],
  [["Mod_Bal_En", "#eaefaf"], null, null, null, ["En_BalRes12", "#aaa5e6"], ["En_BalRes11", "#e3abef"], ["En_BalRes10", "#f9afd0"], ["En_BalRes09", "#dba0ee"]],
  [["En_BalRes08", "#f9a9d2"], ["En_BalRes07", "#f8bcaa"], ["En_BalRes06", "#eeeea4"], ["En_BalRes05", "#b0e69b"], ["En_BalRes04", "#91d0b0"], ["En_BalRes03", "#94c8da"], ["En_BalRes02", "#a0c5dc"], ["En_BalRes01", "#f8c9b4"]],
  [null, null, null, null, ["State_BalRes12", "#8bcfa8"], ["State_BalRes11", "#90cad9"], ["State_BalRes10", "#969be4"], ["State_BalRes09", "#87d3da"]],
  [["State_BalRes08", "#8c9be2"], ["State_BalRes07", "#c491ee"], ["State_BalRes06", "#d19cee"], ["State_BalRes05", "#f89fd5"], ["State_BalRes04", "#f6ac9e"], ["State_BalRes03", "#efe59b"], ["State_BalRes02", "#aee393"], ["State_BalRes01", "#9d9ce4"]],
  Array.from({ length: 8 }, (_, i) => [i ? "" : "CellVoltage", "#b0e5a6", i === 0, i === 7]),
  [["En_Zero_CapV", "#f68c8c"], null, null, null, ["En_CellV12", "#f79d96"], ["En_CellV11", "#efdc91"], ["En_CellV10", "#afe48f"], ["En_CellV09", "#ebd189"]],
  [["En_CellV08", "#b3e484"], ["En_CellV07", "#7dcf90"], ["En_CellV06", "#82dad9"], ["En_CellV05", "#8499e2"], ["En_CellV04", "#b886ea"], ["En_CellV03", "#f78ddb"], ["En_CellV02", "#f896d4"], ["En_CellV01", "#82cf9b"]]
];
const mix = t => `rgb(${[[143, 188], [171, 210], [207, 240]].map(([a, b]) => Math.round(a + (b - a) * t)).join()})`;

document.getElementById("bit-heads").insertAdjacentHTML("beforeend",
  [7, 6, 5, 4, 3, 2, 1, 0].map(b => `<th scope="col">Bit ${b}</th>`).join(""));
document.getElementById("bit-rows").innerHTML = rows.map((row, r) => {
  const cells = row.map((c, i) => {
    const num = `<div class="num">${r * 8 + 7 - i}</div>`;
    if (!c) return `<td><div class="cell">${num}</div></td>`;
    const [name, color, start = true, end = true] = c;
    const label = name && "M_S1_Override_" + name;
    return `<td${name === "En_BalRes10" ? ' class="picked"' : ""} style="background:${color}"><div class="cell">${num}<div class="sig">${label}</div>` +
      `<div class="arrow${start ? " start" : ""}">${start ? use("tri", "") : ""}${end ? use("tri", "end") : ""}</div></div></td>`;
  }).join("");
  return `<tr><th scope="row" style="background:linear-gradient(${mix(r / 8)},${mix((r + 1) / 8)})">Byte ${r}</th>${cells}</tr>`;
}).join("");
```
